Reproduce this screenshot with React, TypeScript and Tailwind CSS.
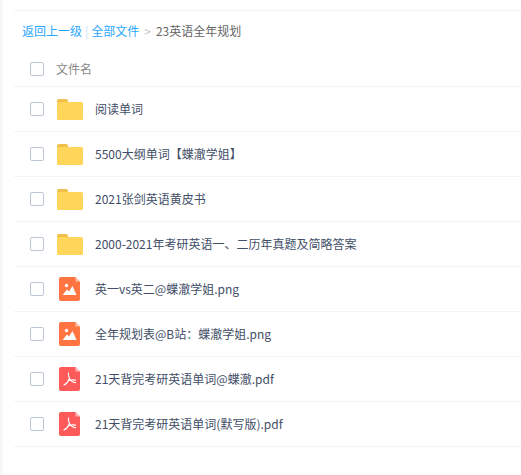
const files = [
  { name: "阅读单词", type: "folder" },
  { name: "5500大纲单词【蝶澈学姐】", type: "folder" },
  { name: "2021张剑英语黄皮书", type: "folder" },
  { name: "2000-2021年考研英语一、二历年真题及简略答案", type: "folder" },
  { name: "英一vs英二@蝶澈学姐.png", type: "image" },
  { name: "全年规划表@B站：蝶澈学姐.png", type: "image" },
  { name: "21天背完考研英语单词@蝶澈.pdf", type: "pdf" },
  { name: "21天背完考研英语单词(默写版).pdf", type: "pdf" },
];

const FolderIcon = () => (
  <svg width="26" height="21" viewBox="0 0 26 21">
    <path d="M0 2a2 2 0 0 1 2-2h7a2 2 0 0 1 2 2v2H0z" fill="#f0bf4c" />
    <rect x="0" y="3" width="26" height="18" rx="1.500" fill="#ffd659" />
  </svg>
);

const ImageIcon = () => (
  <svg width="21" height="24" viewBox="0 0 21 24" className="ml-[2px]">
    <path d="M2 0h14.500L21 4.500V22a2 2 0 0 1-2 2H2a2 2 0 0 1-2-2V2a2 2 0 0 1 2-2z" fill="#ff7440" />
    <path d="M16.500 0L21 4.500h-4.500z" fill="#ffc2a8" />
    <circle cx="7.500" cy="8.500" r="1.700" fill="#fff" />
    <path d="M3.500 18l4.500-5.500 2 2 3.500-5.500 4 9z" fill="#fff" />
  </svg>
);

const PdfIcon = () => (
  <svg width="21" height="24" viewBox="0 0 21 24" className="ml-[2px]">
    <path d="M2 0h14.500L21 4.500V22a2 2 0 0 1-2 2H2a2 2 0 0 1-2-2V2a2 2 0 0 1 2-2z" fill="#ff5a5a" />
    <path d="M16.500 0L21 4.500h-4.500z" fill="#ffb8b8" />
    <path d="M9.500 6c-.6 1.500.2 3.500 1 5.500 1.200 2.300 3 3.800 6 4.200M10.500 11.500c-1 2.500-2.500 5-5.500 6.500M10.500 13.500c2-.6 4-.7 6-.3" fill="none" stroke="#fff" strokeWidth="1.200" strokeLinecap="round" />
  </svg>
);

const Checkbox = () => (
  <div className="w-[14px] h-[14px] border border-[#bcc6d6] rounded-[2px] bg-white shrink-0" />
);

export default function App() {
  return (
    <div className="w-[521px] h-[475px] bg-white overflow-hidden flex font-['Noto_Sans_CJK_SC',sans-serif] text-xs">
      <div className="w-[3px] bg-[#f7f7f7] shrink-0" />
      <div className="flex-1 pl-[11px] pt-[10px]">
        <div className="border-t border-[#f2f2f2] h-[40px] pl-[8px] flex items-center text-[#666]">
          <span className="text-[#2ba6ff]">返回上一级</span>
          <span className="text-[#c4e4fb] mx-[3px]">|</span>
          <span className="text-[#2ba6ff]">全部文件</span>
          <span className="text-[#c0c4cc] ml-[5px] mr-[5px]">&gt;</span>
          <span>23英语全年规划</span>
        </div>
        <div className="h-[37px] pl-[16px] pt-[2px] flex items-center text-[#888] border-b border-[#f2f2f2]">
          <Checkbox />
          <span className="ml-[12px]">文件名</span>
        </div>
        {files.map((file) => (
          <div key={file.name} className="h-[45px] pl-[16px] flex items-center text-[#424e67] border-b border-[#f1f5f9]">
            <Checkbox />
            <div className="w-[26px] ml-[13px] flex">
              {file.type === "folder" && <FolderIcon />}
              {file.type === "image" && <ImageIcon />}
              {file.type === "pdf" && <PdfIcon />}
            </div>
            <span className="ml-[12px]">{file.name}</span>
          </div>
        ))}
      </div>
    </div>
  );
}
